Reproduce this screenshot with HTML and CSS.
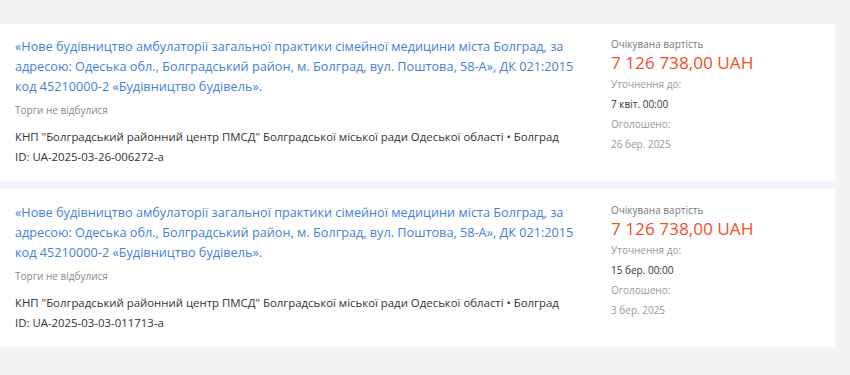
FILE: index.html
```html
<!DOCTYPE html>
<html lang="uk">
<head>
    <meta charset="UTF-8">
    <meta name="viewport" content="width=device-width, initial-scale=1.0">
    <title>Тендери</title>
    <link rel="stylesheet" href="styles.css">
</head>
<body>

    <div class="list">
        <!-- Тендер 1 -->
        <div class="card">
            <div class="info">
                <a class="title" href="#">«Нове будівництво амбулаторії загальної практики сімейної медицини міста Болград, за адресою: Одеська обл., Болградський район, м. Болград, вул. Поштова, 58-А», ДК 021:2015 код 45210000-2 «Будівництво будівель».</a>
                <div class="status">Торги не відбулися</div>
                <div class="buyer">КНП "Болградський районний центр ПМСД" Болградської міської ради Одеської області • Болград</div>
                <div class="tender-id">ID: UA-2025-03-26-006272-a</div>
            </div>
            <div class="side">
                <div class="label">Очікувана вартість</div>
                <div class="price">7 126 738,00 UAH</div>
                <div class="small">Уточнення до:</div>
                <div class="small strong">7 квіт. 00:00</div>
                <div class="small">Оголошено:</div>
                <div class="small">26 бер. 2025</div>
            </div>
        </div>

        <!-- Тендер 2 -->
        <div class="card">
            <div class="info">
                <a class="title" href="#">«Нове будівництво амбулаторії загальної практики сімейної медицини міста Болград, за адресою: Одеська обл., Болградський район, м. Болград, вул. Поштова, 58-А», ДК 021:2015 код 45210000-2 «Будівництво будівель».</a>
                <div class="status">Торги не відбулися</div>
                <div class="buyer">КНП "Болградський районний центр ПМСД" Болградської міської ради Одеської області • Болград</div>
                <div class="tender-id">ID: UA-2025-03-03-011713-a</div>
            </div>
            <div class="side">
                <div class="label">Очікувана вартість</div>
                <div class="price">7 126 738,00 UAH</div>
                <div class="small">Уточнення до:</div>
                <div class="small strong">15 бер. 00:00</div>
                <div class="small">Оголошено:</div>
                <div class="small">3 бер. 2025</div>
            </div>
        </div>
    </div>

</body>
</html>
```

FILE: styles.css
```css
body {
    margin: 0;
    padding-top: 24px;
    font-family: "Open Sans", sans-serif;
    background-color: #f4f4f5;
    color: #333;
}
.list {
    width: 838px;
    background-color: #f3f6fb;
    padding-bottom: 4px;
}
.card {
    display: flex;
    width: 835px;
    box-sizing: border-box;
    padding: 12px 0 14px 15px;
    background-color: #fff;
    margin-bottom: 9px;
}
.card:last-child { margin-bottom: 0; }
.info {
    width: 580px;
    flex-shrink: 0;
}
.side {
    margin-left: 16px;
}
.title {
    display: block;
    font-size: 12.7px;
    line-height: 20px;
    color: #3f82d8;
    text-decoration: none;
}
.status {
    font-size: 10px;
    line-height: 16px;
    color: #8a8a8a;
    margin-top: 6px;
}
.buyer, .tender-id {
    font-size: 11.4px;
    line-height: 20px;
    color: #333;
}
.buyer { margin-top: 9px; }
.label {
    font-size: 10px;
    line-height: 16px;
    color: #777;
}
.price {
    font-size: 17.2px;
    line-height: 22px;
    color: #f0502a;
}
.small {
    font-size: 10px;
    line-height: 20px;
    color: #999;
}
.strong { color: #333; }
```
